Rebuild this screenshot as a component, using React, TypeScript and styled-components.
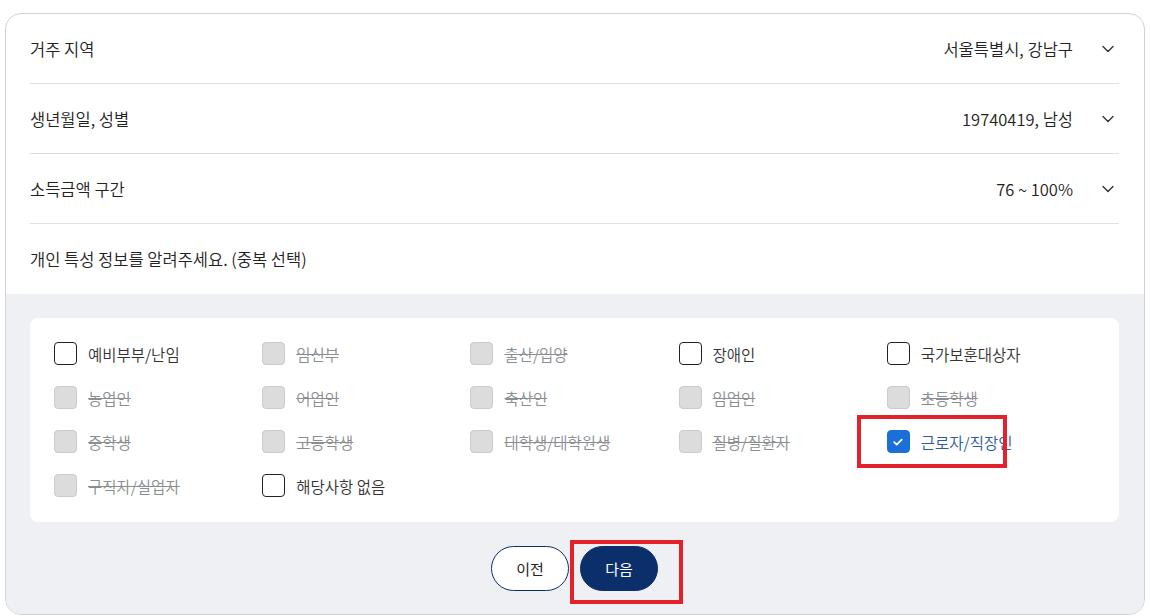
import React from 'react';
import styled, { createGlobalStyle } from 'styled-components';

const GlobalStyle = createGlobalStyle`
  body {
    margin: 0;
    background: #fff;
    font-family: 'Noto Sans CJK KR', 'Noto Sans', sans-serif;
    color: #222;
  }
`;

type Option = { label: string; state: 'off' | 'disabled' | 'on' };

const options: Option[] = [
  { label: '예비부부/난임', state: 'off' },
  { label: '임신부', state: 'disabled' },
  { label: '출산/입양', state: 'disabled' },
  { label: '장애인', state: 'off' },
  { label: '국가보훈대상자', state: 'off' },
  { label: '농업인', state: 'disabled' },
  { label: '어업인', state: 'disabled' },
  { label: '축산인', state: 'disabled' },
  { label: '임업인', state: 'disabled' },
  { label: '초등학생', state: 'disabled' },
  { label: '중학생', state: 'disabled' },
  { label: '고등학생', state: 'disabled' },
  { label: '대학생/대학원생', state: 'disabled' },
  { label: '질병/질환자', state: 'disabled' },
  { label: '근로자/직장인', state: 'on' },
  { label: '구직자/실업자', state: 'disabled' },
  { label: '해당사항 없음', state: 'off' },
];

const rows = [
  { title: '거주 지역', value: '서울특별시, 강남구' },
  { title: '생년월일, 성별', value: '19740419, 남성' },
  { title: '소득금액 구간', value: '76 ~ 100%' },
];

const Card = styled.div`
  margin: 13px 0 0 5px;
  width: 1138px;
  height: 600px;
  border: 1px solid #cfd3d9;
  border-radius: 16px;
  overflow: hidden;
  display: flex;
  flex-direction: column;
`;

const Body = styled.div`
  padding: 0 25px 0 24px;
`;

const Row = styled.div`
  box-sizing: border-box;
  height: 70px;
  display: flex;
  align-items: center;
  justify-content: space-between;
  border-bottom: 1px solid #dcdfe3;
  font-size: 16.5px;
  font-weight: 350;
`;

const Question = styled.div`
  height: 70px;
  display: flex;
  align-items: center;
  font-size: 16.5px;
  font-weight: 350;
`;

const Value = styled.div`
  display: flex;
  align-items: center;
  gap: 28px;
  padding-right: 4px;
`;

const Chevron = () => (
  <svg width="14" height="14" viewBox="0 0 14 14" fill="none">
    <path d="M2 4.5l5 5 5-5" stroke="#333" strokeWidth="1.4" strokeLinecap="round" strokeLinejoin="round" />
  </svg>
);

const Gray = styled.div`
  flex: 1;
  background: #eef0f4;
  padding: 24px 25px 0 24px;
  display: flex;
  flex-direction: column;
  align-items: center;
`;

const Panel = styled.div`
  align-self: stretch;
  background: #fff;
  border-radius: 8px;
  padding: 24px 24px 25px;
  display: grid;
  grid-template-columns: repeat(5, 1fr);
  row-gap: 21px;
`;

const Item = styled.label<{ $state: Option['state'] }>`
  position: relative;
  display: flex;
  align-items: center;
  gap: 11px;
  height: 23px;
  font-size: 15.5px;
  font-weight: 350;
  color: ${(p) => (p.$state === 'disabled' ? '#8a8d92' : p.$state === 'on' ? '#2c5aa0' : '#333')};
  text-decoration: ${(p) => (p.$state === 'disabled' ? 'line-through' : 'none')};
`;

const Box = styled.span<{ $state: Option['state'] }>`
  box-sizing: border-box;
  width: 23px;
  height: 23px;
  border-radius: 4px;
  flex-shrink: 0;
  display: flex;
  align-items: center;
  justify-content: center;
  border: 1px solid ${(p) => (p.$state === 'off' ? '#222' : p.$state === 'on' ? '#1a6fd9' : '#c9cbcf')};
  background: ${(p) => (p.$state === 'disabled' ? '#dcdcdc' : p.$state === 'on' ? '#1a6fd9' : '#fff')};
`;

const Highlight = styled.span`
  position: absolute;
  box-sizing: border-box;
  border: 4px solid #e3212b;
  pointer-events: none;
`;

const Buttons = styled.div`
  position: relative;
  display: flex;
  gap: 11px;
  margin-top: 24px;
`;

const Btn = styled.button<{ $primary?: boolean }>`
  width: 78px;
  height: 45px;
  border-radius: 23px;
  font-family: inherit;
  font-size: 15px;
  border: 1px solid #0b2f6b;
  background: ${(p) => (p.$primary ? '#0b2f6b' : '#fff')};
  color: ${(p) => (p.$primary ? '#fff' : '#222')};
`;

const Check = () => (
  <svg width="12" height="12" viewBox="0 0 12 12" fill="none">
    <path d="M2.2 6.2l2.5 2.4 5-5" stroke="#fff" strokeWidth="1.8" strokeLinecap="round" strokeLinejoin="round" />
  </svg>
);

const App: React.FC = () => {
  return (
    <>
      <GlobalStyle />
      <Card>
        <Body>
          {rows.map((r) => (
            <Row key={r.title}>
              <span>{r.title}</span>
              <Value>
                <span>{r.value}</span>
                <Chevron />
              </Value>
            </Row>
          ))}
          <Question>개인 특성 정보를 알려주세요. (중복 선택)</Question>
        </Body>
        <Gray>
          <Panel>
            {options.map((o) => (
              <Item key={o.label} $state={o.state}>
                <Box $state={o.state}>{o.state === 'on' && <Check />}</Box>
                <span>{o.label}</span>
                {o.state === 'on' && <Highlight style={{ left: -30, top: -15, width: 150, height: 53 }} />}
              </Item>
            ))}
          </Panel>
          <Buttons>
            <Btn>이전</Btn>
            <Btn $primary>다음</Btn>
            <Highlight style={{ left: 79, top: -6, width: 113, height: 64 }} />
          </Buttons>
        </Gray>
      </Card>
    </>
  );
};

export default App;
